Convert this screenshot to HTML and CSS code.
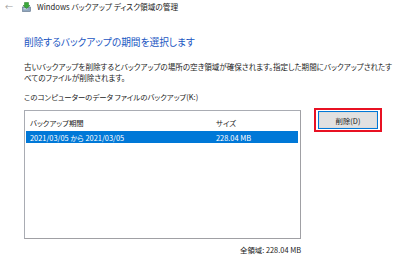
FILE: index.html
```html
<!DOCTYPE html>
<html lang="ja">
<head>
<meta charset="utf-8">
<link rel="stylesheet" href="styles.css">
</head>
<body>
<div class="titlebar">
  <span class="back">←</span>
  <svg class="appicon" width="9" height="10" viewBox="0 0 9 10">
    <rect x="0.5" y="5" width="8" height="4.5" fill="#8fa6bf" stroke="#5b6f86" stroke-width="0.6"/>
    <rect x="1.5" y="6.3" width="4" height="1" fill="#d9e4f0"/>
    <path d="M2.5 0.5 L6.5 0.5 L6.5 3.5 L8 3.5 L4.5 6.5 L1 3.5 L2.5 3.5 Z" fill="#3aa83a" stroke="#1f7a1f" stroke-width="0.5"/>
  </svg>
  <span class="wintitle">Windows バックアップ ディスク領域の管理</span>
</div>
<div class="content">
  <h1 class="heading">削除するバックアップの期間を選択します</h1>
  <p class="desc">古いバックアップを削除するとバックアップの場所の空き領域が確保されます。指定した期間にバックアップされたす<br>べてのファイルが削除されます。</p>
  <p class="label">このコンピューターのデータ ファイルのバックアップ(K:)</p>
  <div class="main">
    <div class="listcol">
      <div class="listbox">
        <div class="lrow lhead"><span class="c1">バックアップ期間</span><span class="c2">サイズ</span></div>
        <div class="lrow lsel"><span class="c1">2021/03/05 から 2021/03/05</span><span class="c2">228.04 MB</span></div>
      </div>
      <div class="total">全領域: 228.04 MB</div>
    </div>
    <div class="btnwrap">
      <div class="btn">削除(D)</div>
    </div>
  </div>
</div>
</body>
</html>
```
FILE: styles.css
```css
html, body {
  margin: 0;
  padding: 0;
  background: #ffffff;
}
body {
  font-family: "Noto Sans CJK JP", "Noto Sans", sans-serif;
  font-feature-settings: "palt";
  color: #1a1a1a;
  width: 400px;
  height: 267px;
  overflow: hidden;
}
.titlebar {
  display: flex;
  align-items: center;
  height: 13px;
  padding-left: 5px;
  font-size: 7.7px;
}
.back {
  color: #9a9a9a;
  font-size: 8px;
  width: 17px;
}
.appicon {
  margin-right: 6px;
}
.wintitle {
  color: #222;
}
.content {
  padding-left: 24px;
}
.heading {
  margin: 22px 0 0 0;
  font-size: 9.7px;
  font-weight: normal;
  color: #1a56c2;
  line-height: 14px;
}
.desc {
  margin: 12px 0 0 0;
  font-size: 7.55px;
  line-height: 11px;
}
.label {
  margin: 8px 0 0 0;
  font-size: 7.4px;
  line-height: 11px;
}
.main {
  display: flex;
  margin-top: 8px;
}
.listcol {
  display: flex;
  flex-direction: column;
}
.listbox {
  width: 272px;
  height: 124px;
  border: 1px solid #a9acb3;
  border-right-color: #a0a0a4;
  border-bottom-color: #a0a0a4;
  padding: 3px 2px 0 1px;
  box-sizing: content-box;
}
.lrow {
  display: flex;
  height: 12px;
  align-items: center;
  font-size: 7.4px;
}
.lhead {
  height: 17px;
}
.lsel {
  background: #0078d7;
  color: #ffffff;
}
.c1 {
  width: 182px;
  padding-left: 4px;
}
.c2 {
  padding-left: 4px;
}
.total {
  align-self: flex-end;
  margin-top: 4px;
  font-size: 7.4px;
  line-height: 14px;
}
.btnwrap {
  margin-left: 13px;
  margin-top: -2px;
  border: 2px solid #e81123;
  width: 60px;
  height: 18px;
  padding: 1px 2px;
  box-sizing: content-box;
  display: flex;
}
.btn {
  flex: 1;
  border: 1px solid #0078d7;
  background: #e1e1e1;
  font-size: 7.4px;
  display: flex;
  align-items: center;
  justify-content: center;
  outline: 1px solid #dcdcdc;
  outline-offset: -2px;
}
```
